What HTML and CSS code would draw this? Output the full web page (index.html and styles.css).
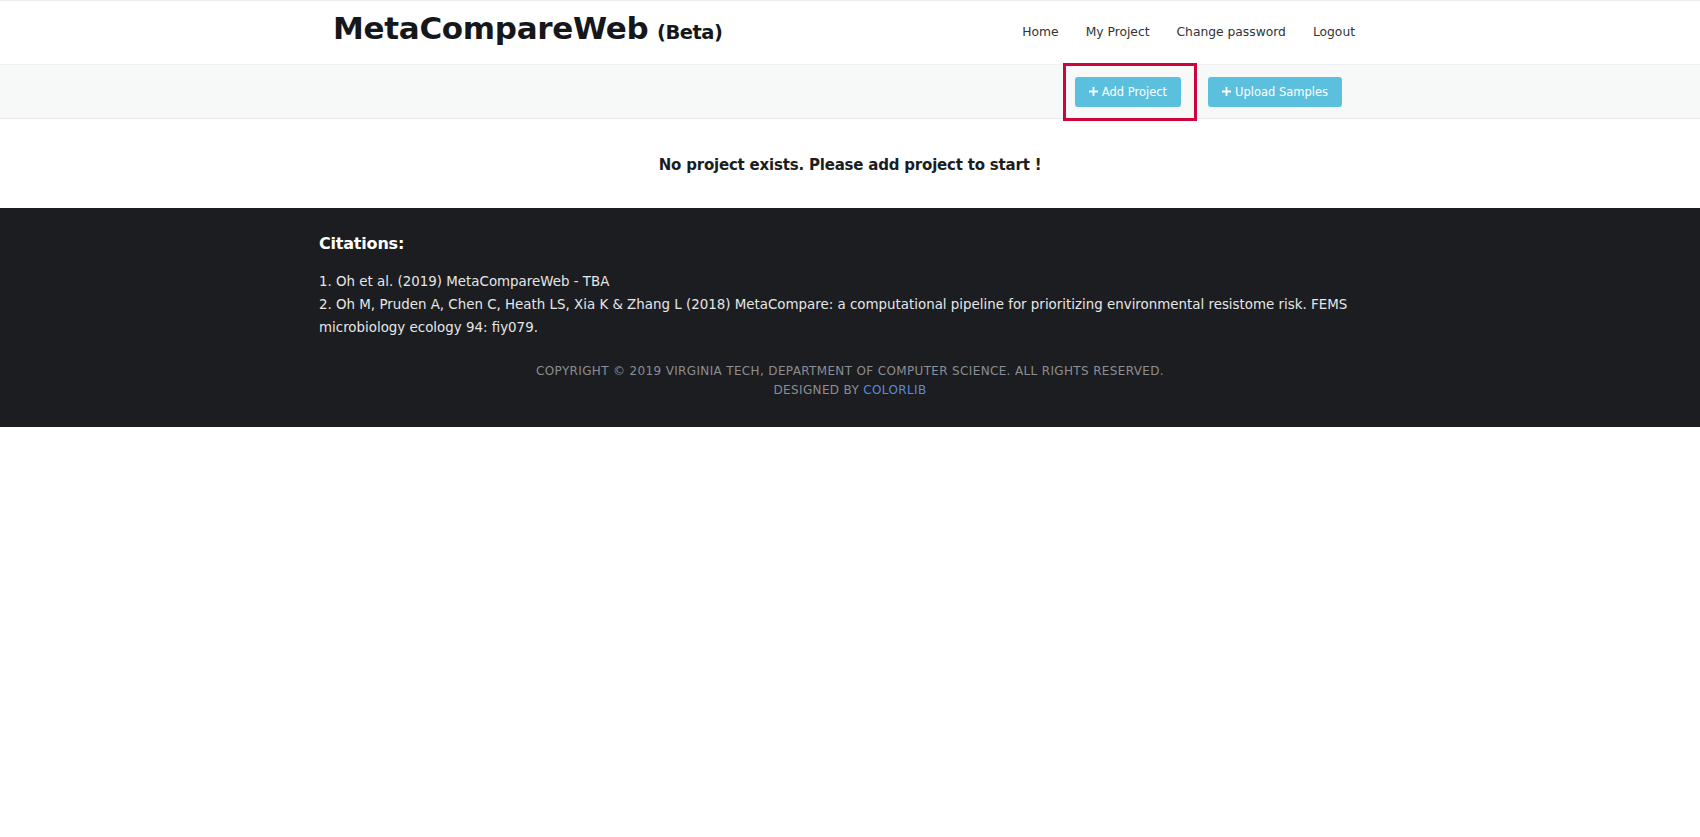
FILE: index.html
```html
<!DOCTYPE html>
<html lang="en">
<head>
<meta charset="utf-8">
<title>MetaCompareWeb (Beta)</title>
<link rel="stylesheet" href="styles.css">
</head>
<body>
<header class="topbar">
  <div class="topbar-inner">
    <a class="brand" href="#">MetaCompareWeb <span class="beta">(Beta)</span></a>
    <nav class="nav">
      <a href="#">Home</a>
      <a href="#">My Project</a>
      <a href="#">Change password</a>
      <a href="#">Logout</a>
    </nav>
  </div>
</header>
<section class="toolbar">
  <div class="toolbar-inner">
    <span class="highlight">
      <a class="btn" href="#"><svg class="plus" viewBox="0 0 10 10"><path d="M4 0h2v4h4v2H6v4H4V6H0V4h4z"/></svg>Add Project</a>
    </span>
    <a class="btn" href="#"><svg class="plus" viewBox="0 0 10 10"><path d="M4 0h2v4h4v2H6v4H4V6H0V4h4z"/></svg>Upload Samples</a>
  </div>
</section>
<main class="content">
  <h4 class="empty">No project exists. Please add project to start !</h4>
</main>
<footer class="footer">
  <div class="footer-inner">
    <h5 class="cite-title">Citations:</h5>
    <p class="cites">1. Oh et al. (2019) MetaCompareWeb - TBA<br>2. Oh M, Pruden A, Chen C, Heath LS, Xia K &amp; Zhang L (2018) MetaCompare: a computational pipeline for prioritizing environmental resistome risk. FEMS microbiology ecology 94: fiy079.</p>
    <p class="copy">Copyright © 2019 Virginia Tech, Department of Computer Science. All rights reserved.<br>Designed by <a href="#">Colorlib</a></p>
  </div>
</footer>
</body>
</html>
```

FILE: styles.css
```css
* { box-sizing: border-box; }
html, body { margin: 0; padding: 0; background: #fff; }
body { font-family: "DejaVu Sans", Verdana, sans-serif; color: #333; }
a { text-decoration: none; }

.topbar { border-top: 1px solid #ececec; background: #fff; height: 64px; }
.topbar-inner {
  width: 1022px; margin: 0 auto 0 333px;
  height: 63px; display: flex; align-items: center; justify-content: space-between;
}
.brand { color: #15171a; font-family: "DejaVu Sans", sans-serif; font-weight: bold; font-size: 31px; letter-spacing: -0.3px; padding-bottom: 10px; }
.beta { font-size: 19.5px; letter-spacing: -0.5px; margin-left: -2px; }
.nav { display: flex; gap: 27px; padding-bottom: 2px; }
.nav a { color: #333; font-size: 12.3px; }

.toolbar {
  background: #f7f8f8; border-top: 1px solid #f0f0f0; border-bottom: 1px solid #ececec;
  height: 55px;
}
.toolbar-inner { width: 1700px; display: flex; align-items: center; height: 53px; padding-left: 1075px; gap: 27px; }
.highlight { position: relative; display: inline-flex; }
.highlight::after {
  content: ""; position: absolute; left: -12px; top: -14px; right: -16px; bottom: -14px;
  border: 3px solid #d0043c;
}
.btn {
  display: inline-flex; align-items: center; justify-content: center; gap: 4px;
  background: #5bc0de; color: #fff; font-size: 11.5px; border-radius: 3px;
  height: 30px; padding: 0 10px 0 10px;
}
.btn:first-child { width: 106px; }
.toolbar-inner > .btn { width: 134px; }
.plus { width: 9px; height: 9px; fill: #fff; }

.content { height: 89px; display: flex; align-items: center; justify-content: center; }
.empty { margin: 0; font-family: "DejaVu Sans", sans-serif; font-weight: bold; font-size: 15px; color: #1b1d21; letter-spacing: -0.2px; padding-top: 2px; }

.footer { background: #1c1d21; height: 219px; color: #e6e6e6; }
.footer-inner { width: 1062px; margin: 0 auto; padding-top: 26px; }
.cite-title { margin: 0 0 17px; font-weight: bold; font-size: 16px; color: #fff; letter-spacing: -0.2px; }
.cites { margin: 0; font-size: 13.4px; line-height: 23px; }
.copy { margin: 23px 0 0; text-align: center; text-transform: uppercase; color: #8b8e93; font-size: 12px; letter-spacing: 0.35px; line-height: 19px; }
.copy a { color: #5b8bdf; }
```
